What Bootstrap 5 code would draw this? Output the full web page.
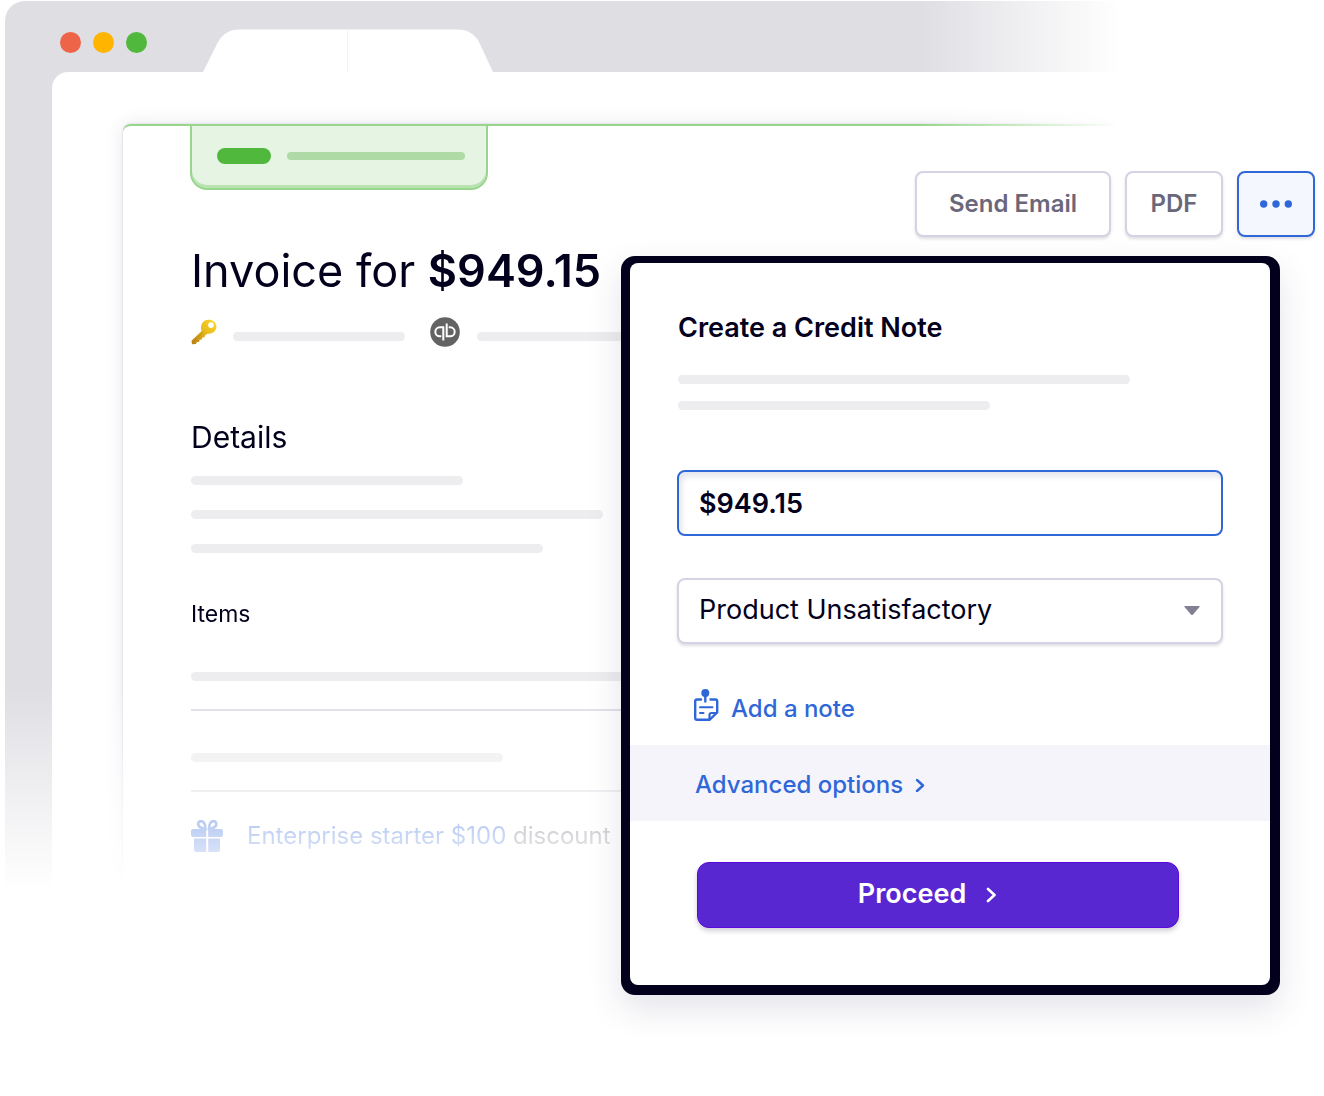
<!DOCTYPE html>
<html lang="en">
<head>
<meta charset="utf-8">
<meta name="viewport" content="width=device-width, initial-scale=1">
<title>Create a Credit Note</title>
<link href="https://cdn.jsdelivr.net/npm/bootstrap@5.3.0/dist/css/bootstrap.min.css" rel="stylesheet">
<style>
  :root { --ink: #02001c; --blue: #3067d8; --line: #d5d3e3; --bone: #ededef; --green: #97d68c; }
  body { font-family: Inter, "Liberation Sans", sans-serif; color: var(--ink); background: #fff; }
  .stage { min-height: 100vh; padding: 1px 204px 0 5px; overflow: hidden; }

  /* browser window, fading out to the right and to the bottom */
  .fade-x { -webkit-mask-image: linear-gradient(to left, transparent 0, #000 200px); mask-image: linear-gradient(to left, transparent 0, #000 200px); }
  .fade-y { -webkit-mask-image: linear-gradient(to top, transparent 0, #000 200px); mask-image: linear-gradient(to top, transparent 0, #000 200px); }
  .browser { background: #dfdee3; border-top-left-radius: 20px; padding-left: 47px; overflow: hidden; }
  .tabstrip { padding: 28px 0 0 8px; gap: 56px; }
  .lights { gap: 12px; padding-top: 3px; }
  .light { width: 21px; height: 21px; }
  .light-close { background: #ee6449; } .light-min { background: #ffb400; } .light-max { background: #50b83c; }
  .viewport-pane { background: #fff; border-top-left-radius: 16px; padding: 52px 0 0 71px; }
  .sheet { background: #fff; border-top: 2px solid var(--green); border-top-left-radius: 8px; padding-bottom: 38px;
    box-shadow: 0 0 2px rgba(30,25,60,.22), 0 0 18px rgba(60,50,110,.12); }
  .banner { width: 298px; height: 64px; margin-left: 67px; padding: 0 21px 2px 25px; gap: 16px; background: #e6f4e3;
    border: 2px solid var(--green); border-top: 0; border-radius: 0 0 17px 17px; box-shadow: inset 0 -3px 0 #b9e2b1; }
  .banner-pill { width: 54px; height: 16px; background: #50b83c; }
  .banner-bar { height: 8px; background: #aedaa5; }
  .sheet-body { padding-left: 68px; }

  .bone { height: 9px; border-radius: 5px; background: var(--bone); flex: none; }
  .w-172 { width: 172px; } .w-272 { width: 272px; } .w-312 { width: 312px; } .w-352 { width: 352px; }
  .w-412 { width: 412px; } .w-452 { width: 452px; }
  .invoice-title { font-size: 45px; line-height: 56px; font-weight: 400; margin: 53px 0 18px; }
  .invoice-title strong { font-weight: 600; }
  .meta { height: 30px; }
  .meta .bone { margin-top: 9px; }
  .meta-key { gap: 16px; margin-right: 25px; }
  .meta-qb { gap: 17px; }
  .section-title { font-size: 30px; line-height: 40px; font-weight: 400; margin: 70px 0 19px; }
  .details { gap: 25px; }
  .items-title { font-size: 23px; line-height: 32px; font-weight: 400; margin: 45px 0 42px; }
  .item-row { padding-bottom: 28px; margin-bottom: 42px; border-bottom: 2px solid #dfdee5; }
  .discount { font-size: 24px; line-height: 32px; gap: 24px; margin-top: -14px; color: #6b6a7a; }
  .blue-link, .blue-link:hover { color: var(--blue); text-decoration: none; }

  /* toolbar and dialog float above the window */
  .floating { top: 171px; right: 9px; }
  .toolbar { gap: 14px; margin-bottom: 19px; }
  .tool { height: 66px; padding: 0; border: 2px solid var(--line); border-radius: 8px; background: #fff; color: #6a677b;
    font-size: 24px; line-height: 32px; font-weight: 600; box-shadow: 0 2px 3px rgba(30,25,60,.14); }
  .tool-wide { width: 196px; } .tool-mid { width: 98px; } .tool-more { width: 78px; }
  .tool-more { border-color: var(--blue); background: #f4f7fd; color: var(--blue); }
  .panel { width: 659px; margin-right: 35px; border: solid var(--ink); border-width: 7px 10px 10px 9px; border-radius: 14px;
    background: var(--ink); box-shadow: 0 14px 34px rgba(50,45,90,.13); }
  .panel-inner { background: #fff; border-radius: 8px; padding: 47px 0 57px; }
  .panel-main { padding: 0 47px 24px; }
  .panel-head { padding: 0 0 60px 1px; }
  .panel-title { font-size: 27px; line-height: 36px; font-weight: 600; margin-bottom: 29px; }
  .intro { gap: 17px; }
  .field { height: 66px; padding: 0 20px; border: 2px solid var(--line); border-radius: 8px; color: var(--ink); font-size: 27px; line-height: 36px; background: #fff; }
  .field-amount { font-weight: 600; border-color: var(--blue); margin-bottom: 42px; box-shadow: inset 3px 5px 5px rgba(70,70,140,.13); }
  .field-reason { background-image: none; padding-bottom: 2px; box-shadow: 0 2px 3px rgba(30,25,60,.14); }
  .caret { right: 23px; top: 28px; pointer-events: none; }
  .note-link { font-size: 24px; line-height: 24px; font-weight: 500; gap: 12px; margin: 45px 0 0 16px; }
  .advanced { background: #f5f4fb; padding: 24px 65px 20px; margin-bottom: 41px; font-size: 24px; line-height: 32px; font-weight: 500; }
  .advanced a { gap: 12px; }
  .proceed-wrap { padding: 0 91px 0 67px; }
  .proceed { height: 66px; padding: 0 22px 2px 0; gap: 20px; border: 1px solid #5b08dc; border-radius: 12px; background: #5927d1; color: #fff;
    font-size: 27px; line-height: 36px; font-weight: 600; box-shadow: 0 3px 5px rgba(30,25,60,.2); }
  .proceed svg { margin-top: 2px; }
</style>
</head>
<body>
<main class="stage position-relative">
  <div class="fade-x"><div class="fade-y">
    <section class="browser" aria-label="Invoice window">
      <div class="tabstrip d-flex align-items-start">
        <div class="lights d-flex">
          <span class="light light-close rounded-circle"></span>
          <span class="light light-min rounded-circle"></span>
          <span class="light light-max rounded-circle"></span>
        </div>
        <svg class="d-block" width="290" height="43" viewBox="0 0 290 43" aria-hidden="true">
          <path d="M0 43 15 13Q22 .5 36 .5H255Q269 .5 276 13L290 43Z" fill="#fff"/>
          <path d="M144.500 1V43" stroke="#f2f2f5"/>
        </svg>
      </div>
      <div class="viewport-pane">
        <article class="sheet">
          <div class="banner d-flex align-items-center">
            <span class="banner-pill rounded-pill"></span>
            <span class="banner-bar rounded-pill flex-grow-1"></span>
          </div>
          <div class="sheet-body">
            <h1 class="invoice-title text-nowrap">Invoice for <strong>$949.15</strong></h1>
            <div class="meta d-flex">
              <div class="meta-key d-flex align-items-center">
                <svg width="26" height="26" viewBox="0 0 26 26" aria-hidden="true">
                  <defs><linearGradient id="gold" x1="1" y1="0" x2="0" y2="1"><stop offset="0" stop-color="#ffd829"/><stop offset=".5" stop-color="#e5b91c"/><stop offset="1" stop-color="#b87c16"/></linearGradient></defs>
                  <path fill="url(#gold)" fill-rule="evenodd" d="M11 4.500C13 1 16 .3 19 .8c4 .7 6.800 4 6.300 7.700-.5 4-4 6.500-8.800 6.300l-2.200 1.400-.8 2-2 .2-.7 2.200-2 .1-.8 2.200-2 .1-1 2-4 .2-.5-3.500L10.500 12C9.700 9.500 9.900 6.500 11 4.500ZM20 3.200a2.900 2.900 0 1 0 0 5.800 2.900 2.900 0 0 0 0-5.800Z"/>
                  <path d="M2 23 12.500 13" stroke="#a87412" fill="none" opacity=".6"/>
                </svg>
                <span class="bone w-172"></span>
              </div>
              <div class="meta-qb d-flex align-items-center">
                <svg width="30" height="30" viewBox="0 0 30 30" aria-hidden="true">
                  <circle cx="15" cy="15" r="14.800" fill="#636363"/>
                  <g fill="none" stroke="#fff" stroke-width="2"><path d="M11.300 19.300H9.800a4.500 4.500 0 0 1 0-9h3.500v13.200"/><path d="M18.700 19.300H20.200a4.500 4.500 0 0 0 0-9h-1.500M16.700 6.500V19.300H20"/></g>
                </svg>
                <span class="bone w-172"></span>
              </div>
            </div>
            <h2 class="section-title">Details</h2>
            <div class="details d-flex flex-column">
              <span class="bone w-272"></span><span class="bone w-412"></span><span class="bone w-352"></span>
            </div>
            <h3 class="items-title">Items</h3>
            <div class="item-row"><div class="bone w-100"></div></div>
            <div class="item-row"><div class="bone w-312"></div></div>
            <div class="discount d-flex align-items-center text-nowrap">
              <svg width="32" height="32" viewBox="0 0 32 32" fill="#3067d8" aria-hidden="true">
                <path d="M2 9H15.200V17H2Q0 17 0 15V11Q0 9 2 9ZM17.200 9H30Q32 9 32 11V15Q32 17 30 17H17.200ZM3 18.500H15.200V32H5Q3 32 3 30ZM17.200 18.500H29V30Q29 32 27 32H17.200Z"/>
                <path d="M14.500 9C14.500 4 12.500 1.200 10 1.200 7.800 1.200 6.800 3 7.300 5 8 7.300 10.500 8.300 14.500 9ZM18 9C18 4 20 1.200 22.500 1.200 24.700 1.200 25.700 3 25.200 5 24.500 7.300 22 8.300 18 9Z" fill="none" stroke="#3067d8" stroke-width="2.600"/>
              </svg>
              <span><a class="blue-link" href="#">Enterprise starter $100</a> discount</span>
            </div>
          </div>
        </article>
      </div>
    </section>
  </div></div>

  <div class="floating position-absolute d-flex flex-column align-items-end">
    <div class="toolbar d-flex">
      <button type="button" class="btn tool tool-wide">Send Email</button>
      <button type="button" class="btn tool tool-mid">PDF</button>
      <button type="button" class="btn tool tool-more" aria-label="More actions">
        <svg width="32" height="8" viewBox="0 0 32 8" fill="currentColor" class="d-block mx-auto" aria-hidden="true"><circle cx="3.700" cy="4" r="3.700"/><circle cx="16" cy="4" r="3.700"/><circle cx="28.300" cy="4" r="3.700"/></svg>
      </button>
    </div>
    <form class="panel" aria-labelledby="panel-title">
      <div class="panel-inner">
        <div class="panel-main">
          <div class="panel-head">
            <h2 class="panel-title" id="panel-title">Create a Credit Note</h2>
            <div class="intro d-flex flex-column"><span class="bone w-452"></span><span class="bone w-312"></span></div>
          </div>
          <input class="form-control field field-amount" aria-label="Amount" type="text" value="$949.15">
          <div class="position-relative">
            <select class="form-select field field-reason" aria-label="Reason"><option>Product Unsatisfactory</option></select>
            <svg class="caret position-absolute" width="16" height="10" viewBox="0 0 16 10" aria-hidden="true"><path d="M1 0H15Q16.300 0 15.500 1L9 8.500Q8 9.500 7 8.500L.5 1Q-.3 0 1 0Z" fill="#828093"/></svg>
          </div>
          <div class="d-flex">
            <a class="note-link blue-link d-flex align-items-end" href="#">
              <svg width="26" height="32" viewBox="0 0 26 32" fill="none" stroke="currentColor" stroke-width="2.400" stroke-linecap="round" stroke-linejoin="round" aria-hidden="true">
                <path d="M8 10.500H4Q2.200 10.500 2.200 12.300V29Q2.200 30.800 4 30.800H16.500L24.200 23.500V12.300Q24.200 10.500 22.400 10.500H17.500M12.300 6V12.500"/>
                <circle cx="12.300" cy="4" r="4" fill="currentColor" stroke="none"/>
                <path d="M7 18.300H19.500M7 24H10.500" stroke-width="2"/><path d="M16.500 30.500V26Q16.500 24 18.500 24H23.500" stroke-width="2.200"/>
              </svg>
              <span>Add a note</span>
            </a>
          </div>
        </div>
        <div class="advanced d-flex">
          <a class="blue-link d-flex align-items-center" href="#">Advanced options
            <svg width="10" height="14" viewBox="0 0 10 14" fill="none" stroke="currentColor" stroke-width="2.400" stroke-linecap="round" stroke-linejoin="round" aria-hidden="true"><path d="M2 2 8 7.500 2 13"/></svg>
          </a>
        </div>
        <div class="proceed-wrap">
          <button type="button" class="btn proceed w-100 d-flex align-items-center justify-content-center">Proceed
            <svg width="10" height="16" viewBox="0 0 10 16" fill="none" stroke="currentColor" stroke-width="2.600" stroke-linecap="round" stroke-linejoin="round" aria-hidden="true"><path d="M2 2 8.500 8 2 14"/></svg>
          </button>
        </div>
      </div>
    </form>
  </div>
</main>
<script src="https://cdn.jsdelivr.net/npm/bootstrap@5.3.0/dist/js/bootstrap.bundle.min.js"></script>
</body>
</html>
